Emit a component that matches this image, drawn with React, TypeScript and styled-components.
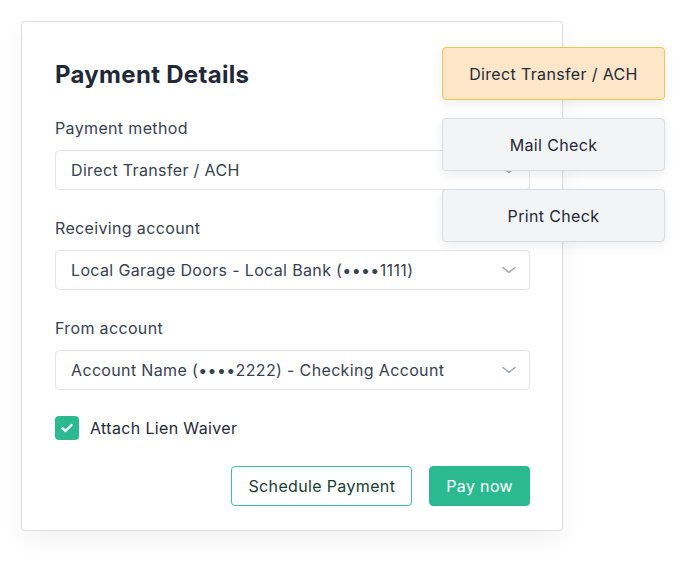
import React from "react";
import styled, { createGlobalStyle } from "styled-components";

const Global = createGlobalStyle`
  html, body { margin: 0; padding: 0; background: #ffffff; }
  body { font-family: Inter, "Noto Sans", sans-serif; letter-spacing: 0.35px; -webkit-font-smoothing: antialiased; }
  * { box-sizing: border-box; }
`;

const Stage = styled.div`
  position: relative;
  width: 680px;
  height: 561px;
  padding: 21px;
`;

const Card = styled.div`
  width: 542px;
  background: #ffffff;
  border: 1px solid #dcdde0;
  border-radius: 4px;
  padding: 37px 32px 24px 33px;
  box-shadow: 0 10px 22px rgba(0, 0, 0, 0.05);
  display: flex;
  flex-direction: column;
`;

const Title = styled.h2`
  margin: 0 0 25px;
  font-size: 24px;
  line-height: 32px;
  font-weight: 700;
  color: #1f2937;
  letter-spacing: 0.3px;
`;

const Field = styled.div<{ $first?: boolean }>`
  display: flex;
  flex-direction: column;
  margin-top: ${(p) => (p.$first ? "0" : "26px")};
`;

const Label = styled.label`
  font-size: 16px;
  line-height: 24px;
  color: #374151;
  margin-bottom: 10px;
`;

const SelectBox = styled.div`
  height: 40px;
  border: 1px solid #e2e4e8;
  border-radius: 4px;
  display: flex;
  align-items: center;
  justify-content: space-between;
  padding: 0 13px 0 15px;
  font-size: 16px;
  color: #374151;
  background: #fff;
`;

const CheckRow = styled.div`
  margin-top: 26px;
  display: flex;
  align-items: center;
  gap: 11px;
  font-size: 16px;
  line-height: 24px;
  color: #1f2937;
`;

const CheckBox = styled.span`
  width: 24px;
  height: 24px;
  border-radius: 4px;
  background: #2bba8f;
  display: flex;
  align-items: center;
  justify-content: center;
`;

const Actions = styled.div`
  margin-top: 26px;
  display: flex;
  justify-content: flex-end;
  gap: 17px;
`;

const Button = styled.button<{ $primary?: boolean }>`
  height: 40px;
  padding: 0 16px;
  border-radius: 4px;
  font-family: Inter, "Noto Sans", sans-serif;
  font-size: 16px;
  letter-spacing: 0.35px;
  border: 1px solid ${(p) => (p.$primary ? "#2bba8f" : "#3cc29a")};
  background: ${(p) => (p.$primary ? "#2bba8f" : "#ffffff")};
  color: ${(p) => (p.$primary ? "#ffffff" : "#183d33")};
  cursor: pointer;
`;

const Menu = styled.div`
  position: absolute;
  left: 442px;
  top: 47px;
  width: 223px;
  display: flex;
  flex-direction: column;
  gap: 18px;
`;

const MenuItem = styled.div<{ $active?: boolean }>`
  height: 53px;
  border-radius: 4px;
  border: 1px solid ${(p) => (p.$active ? "#f6c34c" : "#d9dce1")};
  background: ${(p) => (p.$active ? "#fee6c8" : "#f3f4f6")};
  display: flex;
  align-items: center;
  justify-content: center;
  font-size: 16px;
  color: #1f2937;
  box-shadow: 0 4px 12px rgba(0, 0, 0, 0.07);
`;

const Chevron = () => (
  <svg width="14" height="8" viewBox="0 0 14 8" fill="none">
    <polyline points="1,1.5 7,6.5 13,1.5" stroke="#9ca3af" strokeWidth="1.5" strokeLinecap="round" strokeLinejoin="round" />
  </svg>
);

const Check = () => (
  <svg width="12" height="10" viewBox="0 0 12 10" fill="none">
    <polyline points="1.5,5.2 4.5,8 10.5,2" stroke="#ffffff" strokeWidth="2.4" strokeLinecap="round" strokeLinejoin="round" />
  </svg>
);

const fields = [
  { label: "Payment method", value: "Direct Transfer / ACH" },
  { label: "Receiving account", value: "Local Garage Doors - Local Bank (••••1111)" },
  { label: "From account", value: "Account Name (••••2222) - Checking Account" },
];

const options = ["Direct Transfer / ACH", "Mail Check", "Print Check"];

export default function App() {
  return (
    <>
      <Global />
      <Stage>
        <Card>
          <Title>Payment Details</Title>
          {fields.map((f, i) => (
            <Field key={f.label} $first={i === 0}>
              <Label>{f.label}</Label>
              <SelectBox>
                <span>{f.value}</span>
                <Chevron />
              </SelectBox>
            </Field>
          ))}
          <CheckRow>
            <CheckBox>
              <Check />
            </CheckBox>
            Attach Lien Waiver
          </CheckRow>
          <Actions>
            <Button>Schedule Payment</Button>
            <Button $primary>Pay now</Button>
          </Actions>
        </Card>
        <Menu>
          {options.map((o, i) => (
            <MenuItem key={o} $active={i === 0}>
              {o}
            </MenuItem>
          ))}
        </Menu>
      </Stage>
    </>
  );
}
